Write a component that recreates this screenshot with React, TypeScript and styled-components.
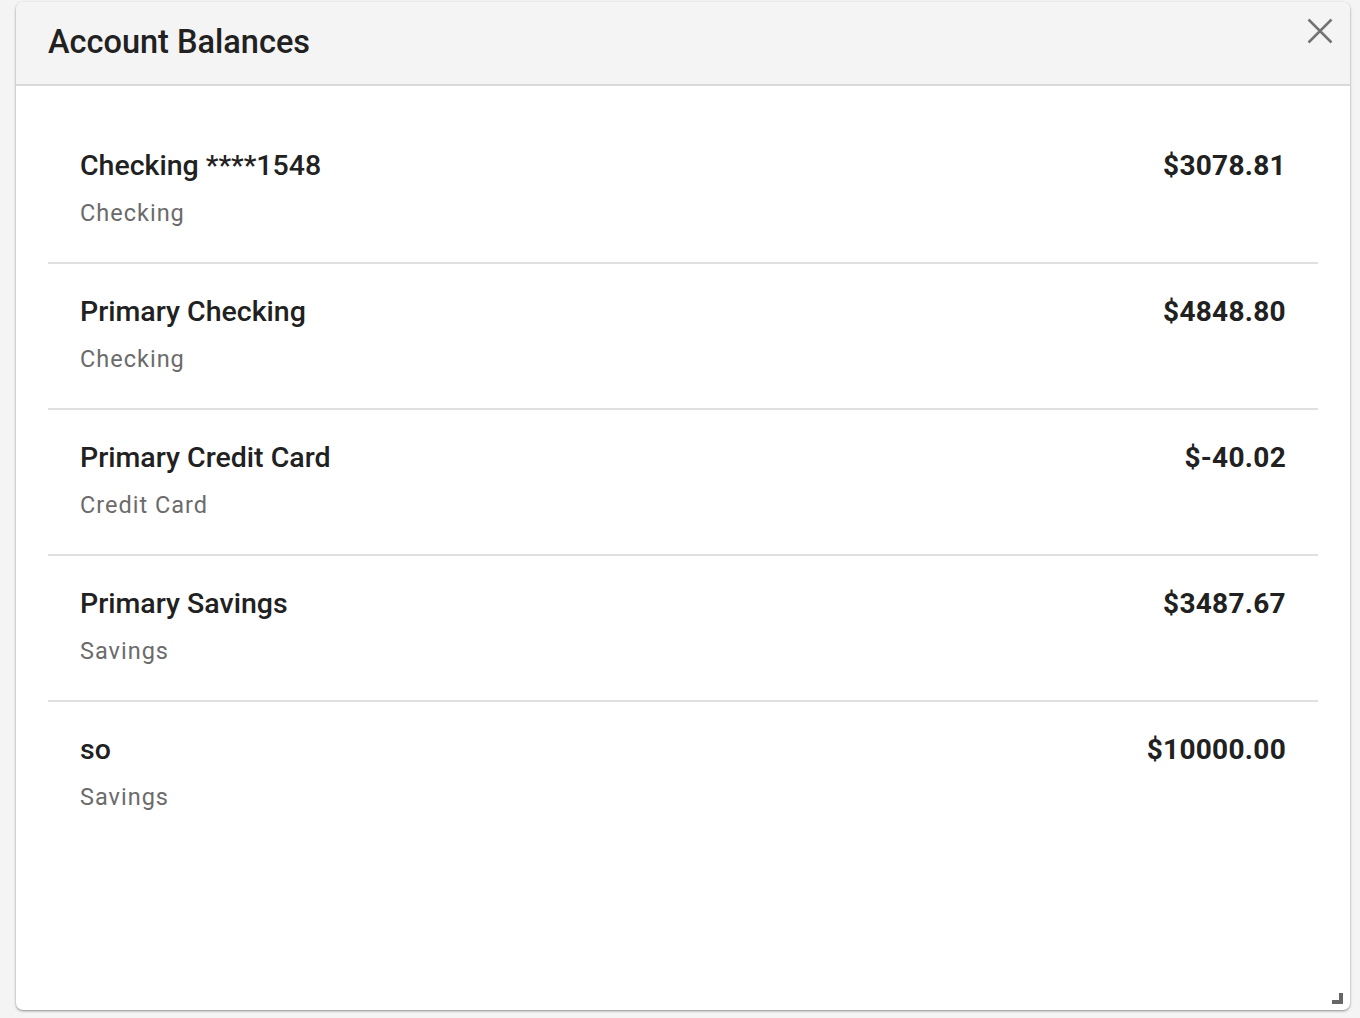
import React from "react";
import styled, { createGlobalStyle } from "styled-components";

const Global = createGlobalStyle`
  html, body { margin: 0; padding: 0; background: #f4f4f4; }
  body { font-family: Roboto, "Noto Sans", Arial, sans-serif; }
  * { box-sizing: border-box; }
`;

const Page = styled.div`
  width: 1360px;
  height: 1018px;
  padding: 2px 10px 8px 16px;
`;

const Dialog = styled.section`
  position: relative;
  width: 1334px;
  height: 1008px;
  background: #ffffff;
  border-radius: 7px;
  box-shadow: 0 1px 3px rgba(0, 0, 0, 0.28), 0 1px 2px rgba(0, 0, 0, 0.18);
  display: flex;
  flex-direction: column;
  overflow: hidden;
`;

const Header = styled.header`
  height: 84px;
  flex: none;
  background: #f4f4f4;
  border-bottom: 2px solid #d9d9d9;
  display: flex;
  align-items: center;
  justify-content: space-between;
  padding: 0 12px 0 32px;
`;

const Title = styled.h1`
  margin: 0;
  font-size: 32.5px;
  font-weight: 500;
  color: #212121;
  padding-bottom: 2px;
`;

const CloseButton = styled.button`
  border: none;
  background: transparent;
  padding: 0;
  width: 36px;
  height: 36px;
  margin-top: -25px;
  display: flex;
  align-items: center;
  justify-content: center;
  cursor: pointer;
`;

const List = styled.ul`
  list-style: none;
  margin: 0;
  padding: 32px 32px 0 32px;
`;

const Row = styled.li<{ $last?: boolean }>`
  height: 146px;
  padding: 31px 32px 0 32px;
  border-bottom: ${(p) => (p.$last ? "none" : "2px solid #e0e0e0")};
  display: flex;
  justify-content: space-between;
  align-items: flex-start;
`;

const Info = styled.div`
  display: flex;
  flex-direction: column;
  gap: 14px;
`;

const Name = styled.div`
  font-size: 28.5px;
  font-weight: 500;
  color: #212121;
  line-height: 34px;
`;

const Kind = styled.div`
  font-size: 23.5px;
  font-weight: 400;
  color: #6b6b6b;
  letter-spacing: 1px;
  line-height: 32px;
`;

const Amount = styled.div`
  font-size: 28px;
  font-weight: 700;
  color: #212121;
  line-height: 34px;
  letter-spacing: 0.3px;
`;

const ResizeHandle = styled.div`
  position: absolute;
  right: 7px;
  bottom: 6px;
  width: 11px;
  height: 11px;
  &::before {
    content: "";
    position: absolute;
    right: 0;
    bottom: 0;
    width: 4px;
    height: 11px;
    background: #666;
  }
  &::after {
    content: "";
    position: absolute;
    right: 0;
    bottom: 0;
    width: 11px;
    height: 4px;
    background: #666;
  }
`;

const accounts = [
  { name: "Checking ****1548", kind: "Checking", amount: "$3078.81" },
  { name: "Primary Checking", kind: "Checking", amount: "$4848.80" },
  { name: "Primary Credit Card", kind: "Credit Card", amount: "$-40.02" },
  { name: "Primary Savings", kind: "Savings", amount: "$3487.67" },
  { name: "so", kind: "Savings", amount: "$10000.00" },
];

export default function App() {
  return (
    <Page>
      <Global />
      <Dialog>
        <Header>
          <Title>Account Balances</Title>
          <CloseButton aria-label="Close">
            <svg width="26" height="26" viewBox="0 0 26 26">
              <path d="M1.5 1.5 L24.5 24.5 M24.5 1.5 L1.5 24.5" stroke="#737373" strokeWidth="2.5" strokeLinecap="butt" />
            </svg>
          </CloseButton>
        </Header>
        <List>
          {accounts.map((a, i) => (
            <Row key={a.name} $last={i === accounts.length - 1}>
              <Info>
                <Name>{a.name}</Name>
                <Kind>{a.kind}</Kind>
              </Info>
              <Amount>{a.amount}</Amount>
            </Row>
          ))}
        </List>
        <ResizeHandle />
      </Dialog>
    </Page>
  );
}
